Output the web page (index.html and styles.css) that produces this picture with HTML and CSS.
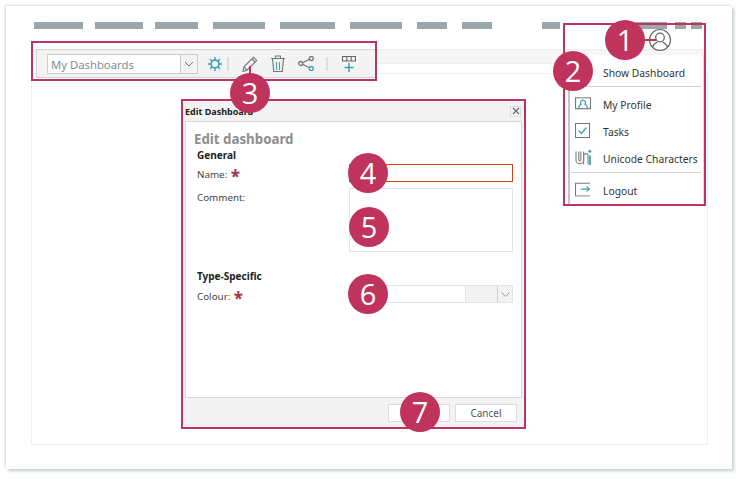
FILE: index.html
```html
<!DOCTYPE html>
<html lang="en">
<head>
<meta charset="utf-8">
<title>Edit Dashboard</title>
<link rel="stylesheet" href="styles.css">
</head>
<body>
<div class="page">
  <div class="frame">
    <nav class="nav">
      <span class="dash w49"></span><span class="dash w48"></span><span class="dash w43"></span><span class="dash w52 gap3"></span><span class="dash w55 gap3"></span><span class="dash w52 gap3"></span><span class="dash w30 gap3"></span><span class="dash w30 gap3"></span>
      <span class="nav-spacer"></span>
      <span class="dash w18"></span><span class="dash w37"></span><span class="dash w11a"></span><span class="dash w11b"></span>
    </nav>
    <div class="strip">
      <div class="toolbar">
        <div class="select">
          <span class="select-text">My Dashboards</span>
          <span class="select-arrow"><svg width="10" height="6" viewBox="0 0 10 6"><path d="M1 1l4 4 4-4" fill="none" stroke="#777" stroke-width="1"/></svg></span>
        </div>
        <svg class="tool first" width="14" height="14" viewBox="0 0 14 14"><g fill="none" stroke="#3aa6ac"><circle cx="7" cy="7" r="3.900" stroke-width="1.700"/><path d="M7 0v3M7 11v3M0 7h3M11 7h3M2 2l2.200 2.200M9.800 9.800L12 12M12 2L9.800 4.200M4.200 9.800L2 12" stroke-width="1.400"/></g></svg>
        <span class="tool-sep"></span>
        <svg class="tool pencil" width="16" height="16" viewBox="0 0 16 16"><path d="M1 15.500l.8-4.500L11.500 1.300l3.200 3.200L5 14.200zM1.800 11l3.200 3.200M9.800 3l3.200 3.200" fill="none" stroke="#777" stroke-width="1.100"/></svg>
        <svg class="tool trash" width="14" height="17" viewBox="0 0 14 17"><path d="M0 3.500h14M4.500 3.500V1h5v2.500M1.500 3.500l1.200 13h8.600l1.200-13" fill="none" stroke="#777" stroke-width="1.100"/><path d="M5.500 7v8M8.500 7v8" stroke="#3aa6ac" stroke-width="1.100"/></svg>
        <svg class="tool share" width="16" height="15" viewBox="0 0 16 15"><g fill="none" stroke-width="1.300"><path d="M3 7.500l10-5M3 7.500l10 5" stroke="#777"/><circle cx="2.700" cy="7.500" r="2" stroke="#777" fill="#f3f3f3"/><circle cx="13.300" cy="2.500" r="2" stroke="#777" fill="#f3f3f3"/><circle cx="13.300" cy="12.500" r="2" stroke="#3aa6ac" fill="#f3f3f3"/></g></svg>
        <span class="tool-sep second"></span>
        <svg class="tool add" width="14" height="16" viewBox="0 0 14 16"><path d="M.5 .5h13v4.500H.5zM4.800 .5V5M9.200 .5V5" fill="none" stroke="#666" stroke-width="1.100"/><path d="M7 7v9M2.500 11.500h9" stroke="#3aa6ac" stroke-width="1.500"/></svg>
      </div>
    </div>
    <main class="panel"></main>
  </div>

  <section class="dialog">
    <header class="dialog-head">
      <span class="dialog-title">Edit Dashboard</span>
      <span class="dialog-close"><svg width="8" height="8" viewBox="0 0 8 8"><path d="M1 1l6 6M7 1l-6 6" stroke="#666" stroke-width="1.100"/></svg></span>
    </header>
    <div class="dialog-body">
      <h2 class="form-title">Edit dashboard</h2>
      <h3 class="group">General</h3>
      <div class="row row-name">
        <label class="label">Name: <span class="req">*</span></label>
        <span class="input name-input"></span>
      </div>
      <div class="row row-comment">
        <label class="label">Comment:</label>
        <span class="input comment-input"></span>
      </div>
      <h3 class="group type-group">Type-Specific</h3>
      <div class="row row-colour">
        <label class="label">Colour: <span class="req">*</span></label>
        <span class="colour-input">
          <span class="colour-swatch"></span>
          <span class="colour-arrow"><svg width="9" height="5" viewBox="0 0 9 5"><path d="M.5 .5l4 4 4-4" fill="none" stroke="#999"/></svg></span>
        </span>
      </div>
    </div>
    <footer class="dialog-foot">
      <button class="btn">OK</button>
      <button class="btn">Cancel</button>
    </footer>
  </section>

  <aside class="menu">
    <div class="menu-item top"><span class="menu-text">Show Dashboard</span></div>
    <div class="menu-sep"></div>
    <div class="menu-item h27 first">
      <svg class="menu-icon" width="16" height="13" viewBox="0 0 16 13"><rect x=".5" y=".5" width="15" height="11" fill="none" stroke="#777" stroke-width="1.200"/><path d="M3.500 11.500c0-3 1.500-4 2.500-4.500a2.500 2.500 0 1 1 4 0c1 .5 2.500 1.500 2.500 4.500" fill="none" stroke="#3aa6ac" stroke-width="1.200"/></svg>
      <span class="menu-text">My Profile</span>
    </div>
    <div class="menu-item h27">
      <svg class="menu-icon" width="15" height="15" viewBox="0 0 15 15"><rect x=".5" y=".5" width="14" height="14" fill="none" stroke="#777"/><path d="M3.500 7.500l3 3 5-6" fill="none" stroke="#3aa6ac" stroke-width="1.300"/></svg>
      <span class="menu-text">Tasks</span>
    </div>
    <div class="menu-item h27">
      <svg class="menu-icon" width="17" height="16" viewBox="0 0 17 16"><path d="M1 2v8.500a3.800 3.800 0 0 0 7.600 0V2M3.800 2v8.500a1 1 0 0 0 2 0V2" fill="none" stroke="#888" stroke-width="1.200"/><path d="M8.600 15V6.500a2.200 2.200 0 0 1 4.400 0V15" fill="none" stroke="#888" stroke-width="1.200"/><path d="M15 6v9.500" stroke="#3aa6ac" stroke-width="1.800"/><circle cx="14.800" cy="1.800" r="1.500" fill="#3aa6ac"/></svg>
      <span class="menu-text">Unicode Characters</span>
    </div>
    <div class="menu-sep after"></div>
    <div class="menu-item logout">
      <svg class="menu-icon" width="16" height="14" viewBox="0 0 16 14"><path d="M15 .5H.5v13H15" fill="none" stroke="#777" stroke-width="1.100"/><path d="M6 6.500h8.500M11.500 4l3 2.500-3 2.500" fill="none" stroke="#3aa6ac" stroke-width="1.200"/></svg>
      <span class="menu-text">Logout</span>
    </div>
  </aside>

  <svg class="user-icon" width="24" height="24" viewBox="0 0 24 24"><g fill="none" stroke="#666" stroke-width="1.200"><circle cx="12" cy="12" r="10.500"/><circle cx="12" cy="9.500" r="4.300"/><path d="M4.500 19c1-3.500 4-4.500 5-5M19.500 19c-1-3.500-4-4.500-5-5"/></g></svg>

  <div class="box box-toolbar"></div>
  <div class="box box-menu"></div>
  <div class="box box-dialog"></div>
  <span class="leader leader-1"></span>
  <span class="leader leader-3"></span>

  <span class="badge b1">1</span>
  <span class="badge b2">2</span>
  <span class="badge b3">3</span>
  <span class="badge b4">4</span>
  <span class="badge b5">5</span>
  <span class="badge b6">6</span>
  <span class="badge b7">7</span>
</div>
</body>
</html>
```

FILE: styles.css
```css
* { box-sizing: border-box; }
html, body { margin: 0; padding: 0; background: #fff; }
body { font-family: "Noto Sans", "Open Sans", sans-serif; color: #333; overflow: hidden; }

.page { position: relative; width: 742px; height: 479px; overflow: hidden; }

.frame {
  position: relative;
  margin: 6px 0 0 6px;
  width: 726px;
  height: 463px;
  background: #fff;
  box-shadow: -1px -1px 2px #d5dcde, 2px 2px 3px #c3cdcf;
  padding: 16px 24px 0 25px;
}

.nav { display: flex; align-items: flex-start; height: 7px; padding: 0 6px 0 3px; }
.dash { display: block; height: 7px; background: #9aa8ab; margin-right: 12px; flex: none; }
.dash.gap3 { margin-right: 15px; }
.w49 { width: 49px; } .w48 { width: 48px; } .w43 { width: 43px; margin-right: 15px; }
.w52 { width: 52px; } .w55 { width: 55px; } .w30 { width: 30px; }
.w18 { width: 18px; margin-right: 70px; }
.w37 { width: 37px; margin-right: 8px; }
.w11a { width: 11px; margin-right: 5px; }
.w11b { width: 11px; margin-right: 0; }
.nav-spacer { flex: 1; }

.strip {
  margin-top: 20px;
  height: 24px;
  background: linear-gradient(#f6f6f6 0, #f6f6f6 13px, #eeeeee 13px, #eeeeee 14px, #fff 14px);
  border-top: 1px solid #eee;
}
.toolbar {
  display: flex;
  align-items: center;
  width: 340px;
  height: 29px;
  margin: -1px 0 0 5px;
  background: #f3f3f3;
  border: 1px solid #d4d4d4;
  padding-left: 10px;
  position: relative;
}
.select {
  display: flex;
  width: 151px;
  height: 20px;
  background: #fff;
  border: 1px solid #ccc;
}
.select-text { flex: 1; padding-left: 3px; font-size: 11.300px; line-height: 19px; color: #878a94; }
.select-arrow { width: 17px; border-left: 1px solid #ccc; background: #f3f3f3; display: flex; align-items: center; justify-content: center; }
.tool { flex: none; display: block; }
.tool.first { margin-left: 10px; }
.tool-sep { width: 2px; height: 14px; background: #dcdcdc; margin-left: 5px; flex: none; }
.tool.pencil { margin-left: 13px; }
.tool.trash { margin-left: 13px; }
.tool.share { margin-left: 13px; }
.tool-sep.second { margin-left: 12px; }
.tool.add { margin-left: 14px; }

.panel {
  height: 372px;
  border: 1px solid #eeeeee;
  background: #fff;
}

.dialog {
  position: absolute;
  left: 183px; top: 101px;
  width: 341px; height: 327px;
  background: #f3f3f3;
  display: flex;
  flex-direction: column;
  padding: 0 2px;
}
.dialog-head { height: 20px; display: flex; align-items: center; justify-content: space-between; padding: 0 1px 0 0; flex: none; }
.dialog-title { font-size: 9px; font-weight: 700; color: #222; }
.dialog-close { width: 11px; height: 11px; border: 1px solid #dcdcdc; display: flex; align-items: center; justify-content: center; }
.dialog-body {
  height: 277px;
  flex: none;
  background: #fff;
  border: 1px solid #d8d8d8;
  padding: 8px 8px 0 8px;
}
.form-title { margin: 0; font-size: 13.300px; line-height: 18px; font-weight: 700; color: #8d8d8d; }
.group { margin: 0 0 0 3px; font-size: 10px; line-height: 14px; font-weight: 700; color: #222; }
.row { display: flex; margin-left: 3px; }
.label { font-size: 9.800px; line-height: 14px; color: #444; width: 152px; flex: none; }
.req { color: #a8324a; font-size: 17px; line-height: 0; font-weight: 700; vertical-align: -5px; margin-left: 1px; }
.row-name { height: 18px; margin-top: 2px; }
.row-name .label { padding-top: 4px; }
.input { display: block; width: 164px; background: #fff; }
.name-input { height: 18px; border: 1px solid #d2431a; }
.row-comment { margin-top: 6px; height: 64px; }
.row-comment .label { padding-top: 3px; }
.comment-input { height: 64px; border: 1px solid #e5e5e5; }
.type-group { margin-top: 17px; }
.row-colour { margin-top: 2px; height: 18px; }
.row-colour .label { padding-top: 5px; }
.colour-input { display: flex; justify-content: flex-end; width: 164px; height: 18px; border: 1px solid #e4e4e4; background: #fff; }
.colour-swatch { width: 32px; background: #f3f3f3; border-left: 1px solid #e4e4e4; }
.colour-arrow { width: 15px; background: #f3f3f3; border-left: 1px solid #ccc; display: flex; align-items: center; justify-content: center; }

.dialog-foot { flex: 1; display: flex; justify-content: flex-end; align-items: center; gap: 5px; padding-right: 5px; }
.btn { width: 62px; height: 18px; padding: 0; border: 1px solid #dcdcdc; background: #fff; font-family: inherit; font-size: 10px; line-height: 16px; color: #555; }

.menu {
  position: absolute;
  left: 568px; top: 55px;
  width: 136px; height: 150px;
  background: #fff;
  border-left: 2px solid #c4c4c4;
  border-right: 1px solid #dddddd;
  padding: 8px 0 0 0;
}
.menu-item { display: flex; align-items: center; padding-left: 33px; position: relative; }
.menu-text { font-size: 10.300px; line-height: 14px; color: #333; white-space: nowrap; }
.menu-item.top { height: 20px; }
.menu-sep { height: 1px; background: #d4d4d4; margin: 3px 2px 0 1px; }
.menu-sep.after { margin-top: 0; }
.menu-item.h27 { height: 27px; }
.menu-item.first { margin-top: 4px; }
.menu-item.logout { height: 27px; margin-top: 4px; }
.menu-icon { position: absolute; left: 5px; top: 50%; transform: translateY(-60%); }

.user-icon { position: absolute; left: 648px; top: 28px; }

.box { position: absolute; border: 2px solid #c0335c; pointer-events: none; }
.box-toolbar { left: 31px; top: 41px; width: 346px; height: 40px; }
.box-menu { left: 563px; top: 23px; width: 143px; height: 183px; }
.box-dialog { left: 181px; top: 99px; width: 345px; height: 330px; }

.leader { position: absolute; background: #c0335c; }
.leader-1 { left: 640px; top: 39px; width: 16px; height: 2px; }
.leader-3 { left: 249px; top: 66px; width: 2px; height: 10px; }

.badge {
  position: absolute;
  width: 40px; height: 40px;
  border-radius: 50%;
  background: #c0335c;
  color: #fff;
  font-family: "Open Sans", "Noto Sans", sans-serif;
  font-size: 29px;
  line-height: 40px;
  text-align: center;
}
.b1 { left: 605px; top: 20px; }
.b2 { left: 553px; top: 51px; }
.b3 { left: 230px; top: 73px; }
.b4 { left: 348px; top: 153px; }
.b5 { left: 349px; top: 207px; }
.b6 { left: 348px; top: 274px; }
.b7 { left: 400px; top: 392px; }
```
